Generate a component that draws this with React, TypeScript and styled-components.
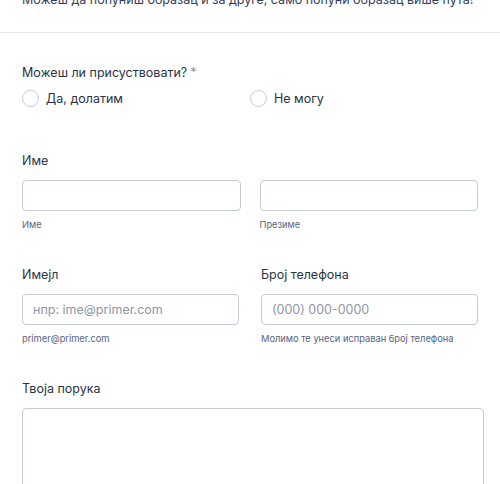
import React from 'react';
import styled, { createGlobalStyle } from 'styled-components';

const GlobalStyle = createGlobalStyle`
  html, body {
    margin: 0;
    padding: 0;
    background: #ffffff;
    overflow: hidden;
  }
  body {
    font-family: Inter, "Noto Sans", "Liberation Sans", sans-serif;
    color: #2c3345;
  }
`;

const StPage = styled.div`
  width: 500px;
  height: 484px;
  overflow: hidden;
`;

const StIntro = styled.div`
  margin-top: -10px;
  padding: 0 16px 22px 22px;
  border-bottom: 1px solid #e3e5ee;
`;

const StIntroText = styled.p`
  margin: 0;
  font-size: 12.5px;
  line-height: 20px;
  color: #33405a;
  white-space: nowrap;
`;

const StForm = styled.form`
  padding: 30px 16px 0 22px;
  display: flex;
  flex-direction: column;
`;

type FieldProps = {
  $gap?: number;
};
const StField = styled.div<FieldProps>`
  margin-bottom: ${(props) => props.$gap ?? 31}px;
`;

const StLabel = styled.div`
  font-size: 12.5px;
  line-height: 20px;
  font-weight: 400;
  color: #2c3345;
  margin-bottom: 9px;
`;

const StRequired = styled.span`
  color: #8d8fa8;
  margin-left: 3px;
`;

const StRadioGroup = styled.div`
  display: grid;
  grid-template-columns: 1fr 1fr;
  padding-right: 6px;
  margin-top: -4px;
`;

const StRadioOption = styled.label`
  display: flex;
  align-items: center;
  gap: 7px;
  height: 20px;
  font-size: 12.5px;
  color: #2c3345;
`;

const StRadioCircle = styled.span`
  width: 15px;
  height: 15px;
  border: 1px solid #c3cad8;
  border-radius: 50%;
  background: #fff;
`;

type ColumnsProps = {
  $gap: number;
};
const StColumns = styled.div<ColumnsProps>`
  display: grid;
  grid-template-columns: 1fr 1fr;
  column-gap: ${(props) => props.$gap}px;
  padding-right: 6px;
`;

const StColumn = styled.div`
  display: flex;
  flex-direction: column;
`;

const StInput = styled.div`
  box-sizing: border-box;
  height: 31px;
  border: 1px solid #c3cad8;
  border-radius: 4px;
  padding: 0 10px;
  display: flex;
  align-items: center;
  font-size: 12.5px;
  color: #8f96a8;
`;

const StSubLabel = styled.div`
  margin-top: 5px;
  font-size: 9.3px;
  line-height: 18px;
  color: #57647e;
`;

const StTextArea = styled.div`
  box-sizing: border-box;
  height: 120px;
  border: 1px solid #c3cad8;
  border-radius: 4px;
`;

const App = () => {
  return (
    <>
      <GlobalStyle />
      <StPage>
        <StIntro>
          <StIntroText>Можеш да попуниш образац и за друге, само попуни образац више пута!</StIntroText>
        </StIntro>
        <StForm>
          <StField $gap={43}>
            <StLabel>
              Можеш ли присуствовати?<StRequired>*</StRequired>
            </StLabel>
            <StRadioGroup>
              <StRadioOption>
                <StRadioCircle />
                Да, долатим
              </StRadioOption>
              <StRadioOption>
                <StRadioCircle />
                Не могу
              </StRadioOption>
            </StRadioGroup>
          </StField>

          <StField>
            <StLabel>Име</StLabel>
            <StColumns $gap={19}>
              <StColumn>
                <StInput />
                <StSubLabel>Име</StSubLabel>
              </StColumn>
              <StColumn>
                <StInput />
                <StSubLabel>Презиме</StSubLabel>
              </StColumn>
            </StColumns>
          </StField>

          <StField>
            <StColumns $gap={22}>
              <StColumn>
                <StLabel>Имејл</StLabel>
                <StInput>нпр: ime@primer.com</StInput>
                <StSubLabel>primer@primer.com</StSubLabel>
              </StColumn>
              <StColumn>
                <StLabel>Број телефона</StLabel>
                <StInput>(000) 000-0000</StInput>
                <StSubLabel>Молимо те унеси исправан број телефона</StSubLabel>
              </StColumn>
            </StColumns>
          </StField>

          <StField>
            <StLabel>Твоја порука</StLabel>
            <StTextArea />
          </StField>
        </StForm>
      </StPage>
    </>
  );
};

export default App;
